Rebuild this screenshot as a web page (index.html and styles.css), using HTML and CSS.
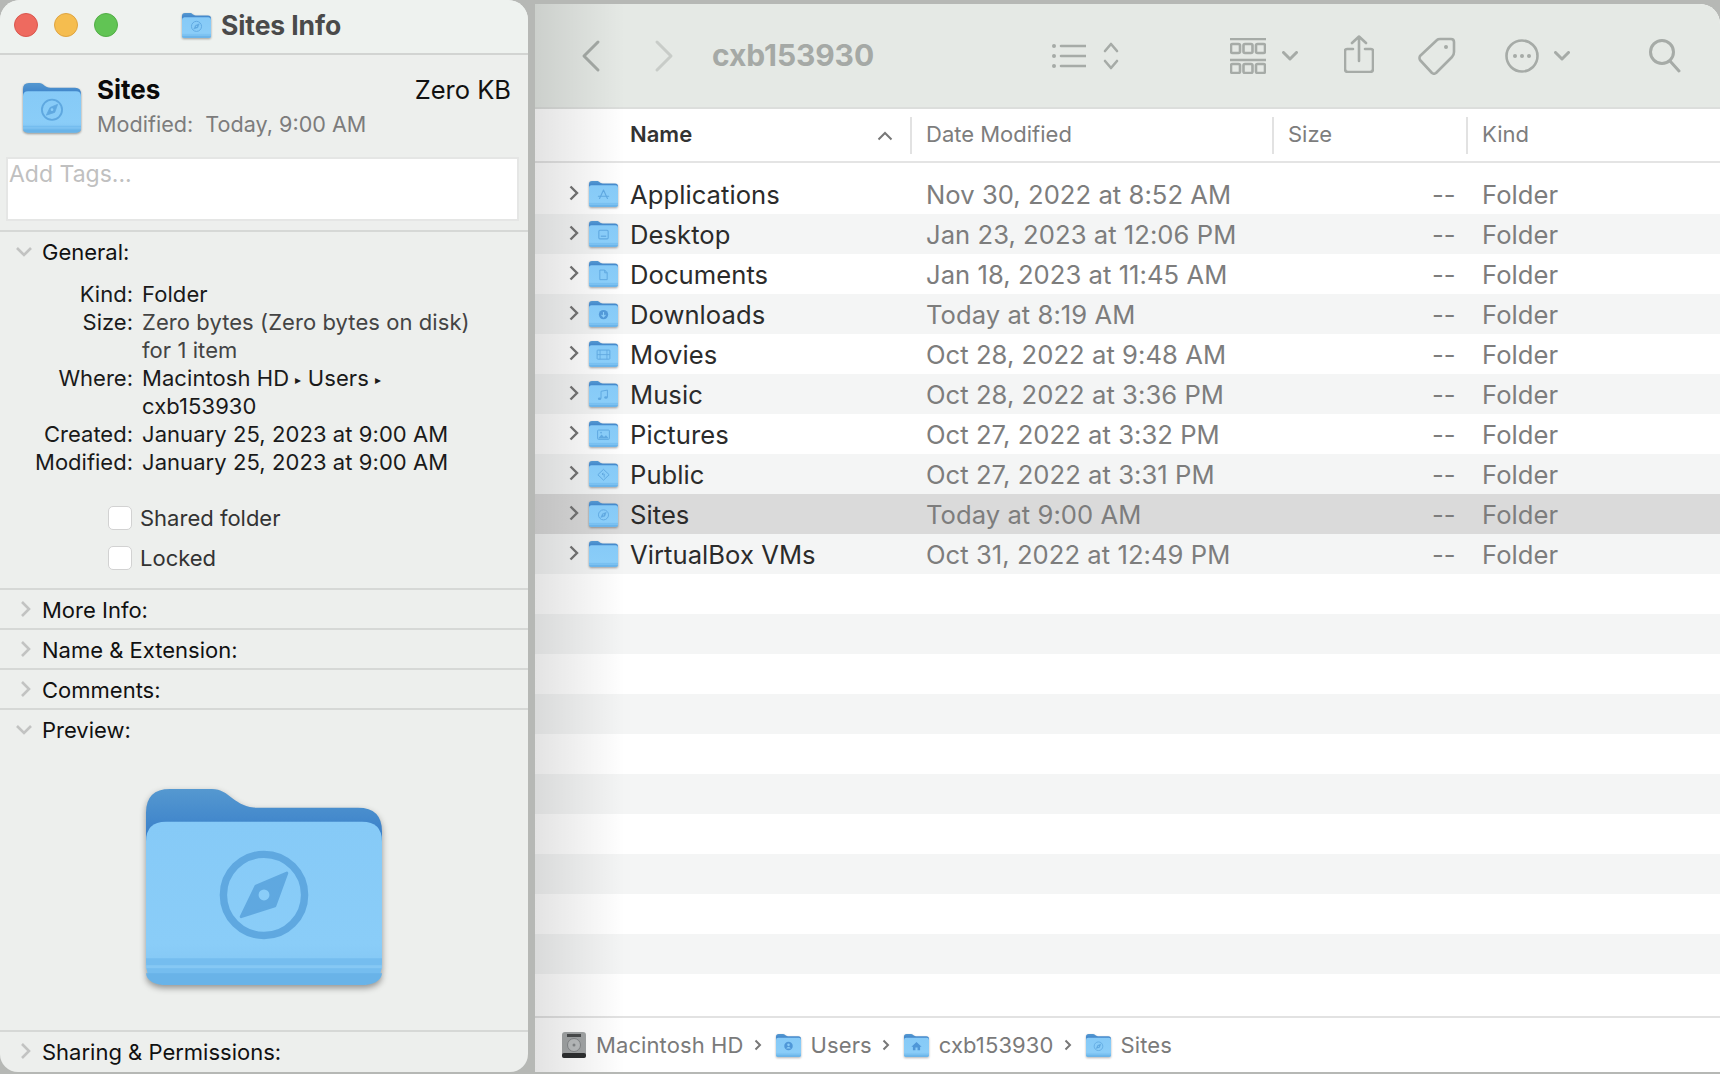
FILE: index.html
```html
<!DOCTYPE html>
<html lang="en">
<head>
  <meta charset="UTF-8">
  <title>Sites Info</title>
  <link rel="stylesheet" href="styles.css">
</head>
<body>

<svg class="defs" width="0" height="0">
  <defs>
    <linearGradient id="backFill" x1="0" y1="0" x2="0" y2="1">
      <stop offset="0" stop-color="#5598d0"/>
      <stop offset="0.4" stop-color="#3c82ca"/>
    </linearGradient>
    <linearGradient id="frontFill" x1="0" y1="0" x2="0" y2="1">
      <stop offset="0" stop-color="#86caf7"/>
      <stop offset="0.75" stop-color="#8acdf8"/>
      <stop offset="1" stop-color="#7fc3f2"/>
    </linearGradient>
    <symbol id="folder" viewBox="0 0 236 200" preserveAspectRatio="none">
      <path fill="url(#backFill)" d="M0 24Q0 0 24 0H66C84 0 88 19 112 19H212Q236 19 236 43V110H0Z"/>
      <path fill="url(#frontFill)" d="M0 53Q0 33 20 33H216Q236 33 236 53V175Q236 198 213 198H23Q0 198 0 175Z"/>
      <path fill="#75bdef" d="M0 171H236V175Q236 198 213 198H23Q0 198 0 175Z"/>
      <rect y="178" width="236" height="3" fill="#86c8f4"/>
      <path fill="#69b3e8" d="M0 186H236Q235 198 213 198H23Q1 198 0 186Z"/>
    </symbol>
    <symbol id="g-compass" viewBox="0 0 236 200">
      <circle cx="118" cy="107" r="41" fill="none" stroke-width="7.5" stroke="#5fa8e0"/>
      <path d="M141 85L129 118L95 129L110 98Z" fill="#5fa8e0" stroke="#5fa8e0" stroke-width="3" stroke-linejoin="round"/>
      <circle cx="118" cy="107" r="5.5" fill="#8acdf8"/>
    </symbol>
    <symbol id="g-apps" viewBox="0 0 236 200">
      <path d="M118 68L86 136M118 68L150 136M76 118H160" fill="none" stroke="#5fa8e0" stroke-width="9" stroke-linecap="round"/>
    </symbol>
    <symbol id="g-desktop" viewBox="0 0 236 200">
      <rect x="80" y="70" width="76" height="70" rx="9" fill="none" stroke="#5fa8e0" stroke-width="9"/>
      <path d="M96 118H140" stroke="#5fa8e0" stroke-width="10"/>
    </symbol>
    <symbol id="g-doc" viewBox="0 0 236 200">
      <path d="M88 68H128L148 90V146H88ZM128 68V90H148" fill="none" stroke="#5fa8e0" stroke-width="8" stroke-linejoin="round"/>
    </symbol>
    <symbol id="g-down" viewBox="0 0 236 200">
      <circle cx="118" cy="105" r="38" fill="#5299d8"/>
      <path d="M118 84V122M102 108L118 124L134 108" fill="none" stroke="#8acdf8" stroke-width="9"/>
    </symbol>
    <symbol id="g-film" viewBox="0 0 236 200">
      <rect x="66" y="68" width="104" height="74" rx="6" fill="none" stroke="#5fa8e0" stroke-width="8"/>
      <path d="M90 68V142M146 68V142M66 105H90M146 105H170M90 105H146" fill="none" stroke="#5fa8e0" stroke-width="7"/>
    </symbol>
    <symbol id="g-music" viewBox="0 0 236 200">
      <path d="M98 136V78L150 68V126" fill="none" stroke="#5fa8e0" stroke-width="8"/>
      <ellipse cx="86" cy="138" rx="14" ry="10" fill="#5fa8e0"/>
      <ellipse cx="138" cy="128" rx="14" ry="10" fill="#5fa8e0"/>
    </symbol>
    <symbol id="g-picture" viewBox="0 0 236 200">
      <rect x="70" y="68" width="96" height="76" rx="7" fill="none" stroke="#5fa8e0" stroke-width="8"/>
      <path d="M74 136L102 104L122 124L138 110L162 136Z" fill="#5fa8e0"/>
      <circle cx="98" cy="88" r="7" fill="#5fa8e0"/>
    </symbol>
    <symbol id="g-public" viewBox="0 0 236 200">
      <path d="M118 62L164 106L118 150L72 106Z" fill="none" stroke="#5fa8e0" stroke-width="8" stroke-linejoin="round"/>
      <path d="M124 128V100H106M116 90L106 100L116 110" fill="none" stroke="#5fa8e0" stroke-width="7"/>
    </symbol>
    <symbol id="g-user" viewBox="0 0 236 200">
      <circle cx="118" cy="105" r="40" fill="#4f97d8"/>
      <circle cx="118" cy="94" r="12" fill="#8acdf8"/>
      <path d="M96 128Q118 100 140 128Z" fill="#8acdf8"/>
    </symbol>
    <symbol id="g-home" viewBox="0 0 236 200">
      <path d="M118 68L166 112H152V146H128V120H108V146H84V112H70Z" fill="#4f97d8"/>
    </symbol>
  </defs>
</svg>

<main class="screen">

  <aside class="info">
    <header class="info-title">
      <div class="lights">
        <span class="light red"></span>
        <span class="light yellow"></span>
        <span class="light green"></span>
      </div>
      <svg class="fld fld-title"><use href="#folder"/><use href="#g-compass"/></svg>
      <span class="info-title-text">Sites Info</span>
    </header>

    <section class="summary">
      <svg class="fld fld-summary"><use href="#folder"/><use href="#g-compass"/></svg>
      <div class="summary-text">
        <div class="summary-top">
          <strong class="summary-name">Sites</strong>
          <span class="summary-size">Zero KB</span>
        </div>
        <div class="summary-mod">Modified:&nbsp; Today, 9:00 AM</div>
      </div>
    </section>

    <div class="tags">Add Tags...</div>

    <section class="pane pane-general">
      <div class="pane-head">
        <svg class="disc disc-down" viewBox="0 0 16 10"><path d="M1 1L8 8L15 1"/></svg>
        General:
      </div>
      <dl class="props">
        <dt>Kind:</dt><dd>Folder</dd>
        <dt>Size:</dt><dd class="soft">Zero bytes (Zero bytes on disk)<br>for 1 item</dd>
        <dt>Where:</dt><dd>Macintosh HD <span class="tri">▸</span> Users <span class="tri">▸</span><br>cxb153930</dd>
        <dt>Created:</dt><dd>January 25, 2023 at 9:00 AM</dd>
        <dt>Modified:</dt><dd>January 25, 2023 at 9:00 AM</dd>
      </dl>
      <div class="checks">
        <label class="check"><span class="box"></span>Shared folder</label>
        <label class="check"><span class="box"></span>Locked</label>
      </div>
    </section>

    <section class="pane"><div class="pane-head"><svg class="disc disc-right" viewBox="0 0 10 16"><path d="M1 1L8 8L1 15"/></svg>More Info:</div></section>
    <section class="pane"><div class="pane-head"><svg class="disc disc-right" viewBox="0 0 10 16"><path d="M1 1L8 8L1 15"/></svg>Name &amp; Extension:</div></section>
    <section class="pane"><div class="pane-head"><svg class="disc disc-right" viewBox="0 0 10 16"><path d="M1 1L8 8L1 15"/></svg>Comments:</div></section>

    <section class="pane pane-preview">
      <div class="pane-head">
        <svg class="disc disc-down" viewBox="0 0 16 10"><path d="M1 1L8 8L15 1"/></svg>
        Preview:
      </div>
      <div class="preview">
        <svg class="fld fld-big"><use href="#folder"/><use href="#g-compass"/></svg>
      </div>
    </section>

    <section class="pane"><div class="pane-head"><svg class="disc disc-right" viewBox="0 0 10 16"><path d="M1 1L8 8L1 15"/></svg>Sharing &amp; Permissions:</div></section>
  </aside>

  <div class="finder">
    <div class="finder-shade"></div>

    <header class="toolbar">
      <svg class="tb tb-back" viewBox="0 0 20 34"><path d="M17 3L3 17L17 31"/></svg>
      <svg class="tb tb-fwd" viewBox="0 0 20 34"><path d="M3 3L17 17L3 31"/></svg>
      <span class="tb-title">cxb153930</span>
      <svg class="tb tb-list" viewBox="0 0 34 26">
        <circle class="dot" cx="2" cy="3" r="2"/><circle class="dot" cx="2" cy="13" r="2"/><circle class="dot" cx="2" cy="23" r="2"/>
        <path d="M9 3H34M9 13H34M9 23H34"/>
      </svg>
      <svg class="tb tb-updown" viewBox="0 0 16 30"><path d="M2 10L8 3L14 10M2 20L8 27L14 20"/></svg>
      <svg class="tb tb-grid" viewBox="0 0 36 36">
        <path d="M0 1H36M0 22H36" />
        <rect x="1" y="6" width="9" height="9" rx="1.5"/><rect x="13.5" y="6" width="9" height="9" rx="1.5"/><rect x="26" y="6" width="9" height="9" rx="1.5"/>
        <rect x="1" y="26" width="9" height="9" rx="1.5"/><rect x="13.5" y="26" width="9" height="9" rx="1.5"/><rect x="26" y="26" width="9" height="9" rx="1.5"/>
      </svg>
      <svg class="tb tb-chev tb-chev1" viewBox="0 0 16 10"><path d="M1.5 1.5L8 8L14.5 1.5"/></svg>
      <svg class="tb tb-share" viewBox="0 0 30 38">
        <path d="M9 14H3Q1 14 1 16V34Q1 37 4 37H26Q29 37 29 34V16Q29 14 27 14H21M15 26V2M8 8L15 1.5L22 8"/>
      </svg>
      <svg class="tb tb-tag" viewBox="0 0 38 38">
        <path d="M22 2H33Q36 2 36 5V15Q36 18 34 20L18 36Q16 37.500 14 36L2 23Q1 21 2 19L19 3Q20 2 22 2Z"/>
        <circle class="dot" cx="28" cy="10" r="2"/>
      </svg>
      <svg class="tb tb-more" viewBox="0 0 34 34">
        <circle cx="17" cy="17" r="15.500"/>
        <circle class="dot" cx="10" cy="17" r="2"/><circle class="dot" cx="17" cy="17" r="2"/><circle class="dot" cx="24" cy="17" r="2"/>
      </svg>
      <svg class="tb tb-chev tb-chev2" viewBox="0 0 16 10"><path d="M1.500 1.500L8 8L14.500 1.500"/></svg>
      <svg class="tb tb-search" viewBox="0 0 32 34">
        <circle cx="13" cy="13" r="11.500"/>
        <path d="M21 22L30 32"/>
      </svg>
    </header>

    <div class="cols">
      <div class="col col-name">
        <span>Name</span>
        <svg class="sort" viewBox="0 0 16 10"><path d="M1.500 8.500L8 2L14.500 8.500"/></svg>
      </div>
      <div class="col col-date">Date Modified</div>
      <div class="col col-size">Size</div>
      <div class="col col-kind">Kind</div>
    </div>

    <div class="rows">
      <div class="row"><svg class="exp" viewBox="0 0 10 16"><path d="M1.500 1.500L8 8L1.500 14.500"/></svg><svg class="fld fld-row"><use href="#folder"/><use href="#g-apps"/></svg><span class="r-name">Applications</span><span class="r-date">Nov 30, 2022 at 8:52 AM</span><span class="r-size">--</span><span class="r-kind">Folder</span></div>
      <div class="row"><svg class="exp" viewBox="0 0 10 16"><path d="M1.500 1.500L8 8L1.500 14.500"/></svg><svg class="fld fld-row"><use href="#folder"/><use href="#g-desktop"/></svg><span class="r-name">Desktop</span><span class="r-date">Jan 23, 2023 at 12:06 PM</span><span class="r-size">--</span><span class="r-kind">Folder</span></div>
      <div class="row"><svg class="exp" viewBox="0 0 10 16"><path d="M1.500 1.500L8 8L1.500 14.500"/></svg><svg class="fld fld-row"><use href="#folder"/><use href="#g-doc"/></svg><span class="r-name">Documents</span><span class="r-date">Jan 18, 2023 at 11:45 AM</span><span class="r-size">--</span><span class="r-kind">Folder</span></div>
      <div class="row"><svg class="exp" viewBox="0 0 10 16"><path d="M1.500 1.500L8 8L1.500 14.500"/></svg><svg class="fld fld-row"><use href="#folder"/><use href="#g-down"/></svg><span class="r-name">Downloads</span><span class="r-date">Today at 8:19 AM</span><span class="r-size">--</span><span class="r-kind">Folder</span></div>
      <div class="row"><svg class="exp" viewBox="0 0 10 16"><path d="M1.500 1.500L8 8L1.500 14.500"/></svg><svg class="fld fld-row"><use href="#folder"/><use href="#g-film"/></svg><span class="r-name">Movies</span><span class="r-date">Oct 28, 2022 at 9:48 AM</span><span class="r-size">--</span><span class="r-kind">Folder</span></div>
      <div class="row"><svg class="exp" viewBox="0 0 10 16"><path d="M1.500 1.500L8 8L1.500 14.500"/></svg><svg class="fld fld-row"><use href="#folder"/><use href="#g-music"/></svg><span class="r-name">Music</span><span class="r-date">Oct 28, 2022 at 3:36 PM</span><span class="r-size">--</span><span class="r-kind">Folder</span></div>
      <div class="row"><svg class="exp" viewBox="0 0 10 16"><path d="M1.500 1.500L8 8L1.500 14.500"/></svg><svg class="fld fld-row"><use href="#folder"/><use href="#g-picture"/></svg><span class="r-name">Pictures</span><span class="r-date">Oct 27, 2022 at 3:32 PM</span><span class="r-size">--</span><span class="r-kind">Folder</span></div>
      <div class="row"><svg class="exp" viewBox="0 0 10 16"><path d="M1.500 1.500L8 8L1.500 14.500"/></svg><svg class="fld fld-row"><use href="#folder"/><use href="#g-public"/></svg><span class="r-name">Public</span><span class="r-date">Oct 27, 2022 at 3:31 PM</span><span class="r-size">--</span><span class="r-kind">Folder</span></div>
      <div class="row selected"><svg class="exp" viewBox="0 0 10 16"><path d="M1.500 1.500L8 8L1.500 14.500"/></svg><svg class="fld fld-row"><use href="#folder"/><use href="#g-compass"/></svg><span class="r-name">Sites</span><span class="r-date">Today at 9:00 AM</span><span class="r-size">--</span><span class="r-kind">Folder</span></div>
      <div class="row"><svg class="exp" viewBox="0 0 10 16"><path d="M1.500 1.500L8 8L1.500 14.500"/></svg><svg class="fld fld-row"><use href="#folder"/></svg><span class="r-name">VirtualBox VMs</span><span class="r-date">Oct 31, 2022 at 12:49 PM</span><span class="r-size">--</span><span class="r-kind">Folder</span></div>
      <div class="row"></div>
      <div class="row"></div>
      <div class="row"></div>
      <div class="row"></div>
      <div class="row"></div>
      <div class="row"></div>
      <div class="row"></div>
      <div class="row"></div>
      <div class="row"></div>
      <div class="row"></div>
    </div>

    <footer class="pathbar">
      <svg class="hd" viewBox="0 0 26 28">
        <rect x="1" y="1" width="24" height="26" rx="3" fill="#a3a6a7"/>
        <rect x="1" y="22" width="24" height="5" rx="2" fill="#2d2f30"/>
        <rect x="6" y="3" width="14" height="3" fill="#4a4c4d"/>
        <circle cx="13" cy="14" r="6.500" fill="#bcbfc0" stroke="#85888a"/>
        <circle cx="13" cy="14" r="1.500" fill="#85888a"/>
      </svg>
      <span>Macintosh HD</span>
      <svg class="crumb" viewBox="0 0 8 12"><path d="M1.500 1.500L6 6L1.500 10.500"/></svg>
      <svg class="fld fld-path"><use href="#folder"/><use href="#g-user"/></svg>
      <span>Users</span>
      <svg class="crumb" viewBox="0 0 8 12"><path d="M1.500 1.500L6 6L1.500 10.500"/></svg>
      <svg class="fld fld-path"><use href="#folder"/><use href="#g-home"/></svg>
      <span>cxb153930</span>
      <svg class="crumb" viewBox="0 0 8 12"><path d="M1.500 1.500L6 6L1.500 10.500"/></svg>
      <svg class="fld fld-path"><use href="#folder"/><use href="#g-compass"/></svg>
      <span>Sites</span>
    </footer>
  </div>

</main>

</body>
</html>
```

FILE: styles.css
```css
* {
  box-sizing: border-box;
}
html, body {
  margin: 0;
  height: 100%;
  overflow: hidden;
}
body {
  font-family: Inter, "Open Sans", sans-serif;
  background: #b6b8b5;
  color: #222;
}
.defs {
  display: block;
  height: 0;
}
.screen {
  display: flex;
  width: 1720px;
  height: 1074px;
}

/* folders */
.fld {
  display: block;
  flex: none;
  overflow: visible;
}
.fld use {
  width: 100%;
  height: 100%;
}
.fld-title {
  width: 29px;
  height: 25px;
  margin-right: 10px;
  filter: drop-shadow(0 1px 1px rgba(0, 0, 0, .35));
}
.fld-summary {
  width: 58px;
  height: 50px;
  filter: drop-shadow(0 1px 1px rgba(0, 0, 0, .4));
}
.fld-big {
  width: 236px;
  height: 198px;
  filter: drop-shadow(0 3px 3px rgba(0, 0, 0, .38));
}
.fld-row {
  width: 29px;
  height: 26px;
  filter: drop-shadow(0 1px 1px rgba(0, 0, 0, .35));
}
.fld-path {
  width: 25px;
  height: 23px;
  filter: drop-shadow(0 1px 1px rgba(0, 0, 0, .3));
}

/* info window */
.info {
  flex: none;
  width: 528px;
  height: 1072px;
  background: #edefed;
  border-radius: 20px 20px 18px 18px;
  overflow: hidden;
}
.info-title {
  display: flex;
  align-items: center;
  height: 55px;
  padding: 0 0 3px 14px;
  background: #eef2ef;
  border-bottom: 2px solid #d2d4d2;
}
.lights {
  display: flex;
  gap: 16px;
  margin-right: 64px;
}
.light {
  width: 24px;
  height: 24px;
  border-radius: 50%;
}
.red { background: #ee6a5f; border: 1px solid #d9574e; }
.yellow { background: #f5bd4f; border: 1px solid #dea440; }
.green { background: #61c454; border: 1px solid #52ad46; }
.info-title-text {
  font-size: 26.500px;
  font-weight: 700;
  color: #4a4a4a;
  letter-spacing: -.1px;
}
.summary {
  display: flex;
  align-items: flex-start;
  height: 102px;
  padding: 28px 17px 0 23px;
}
.summary-text {
  flex: 1;
  margin-left: 16px;
  margin-top: -12px;
}
.summary-top {
  display: flex;
  justify-content: space-between;
  align-items: center;
  height: 36px;
}
.summary-name {
  font-size: 26px;
  font-weight: 700;
  color: #0a0a0a;
}
.summary-size {
  font-size: 25.500px;
  color: #111;
}
.summary-mod {
  margin-top: 4px;
  font-size: 21.600px;
  color: #7c7c7c;
}
.tags {
  height: 64px;
  margin: 0 9px 0 6px;
  padding: 1px 0 0 1px;
  background: #fff;
  border: 2px solid #e5e6e5;
  font-size: 23px;
  line-height: 28px;
  color: #c0c0c0;
}
.pane {
  border-top: 2px solid #d6d8d6;
}
.tags + .pane {
  margin-top: 9px;
}
.pane-head {
  position: relative;
  height: 38px;
  padding-left: 42px;
  font-size: 22px;
  line-height: 40px;
  color: #111;
}
.pane-general {
  height: 358px;
}
.pane-preview {
  height: 322px;
}
.disc {
  position: absolute;
  fill: none;
  stroke: #c2c3c2;
  stroke-width: 2.600;
}
.disc-down {
  left: 16px;
  top: 15px;
  width: 16px;
  height: 10px;
}
.disc-right {
  left: 21px;
  top: 11px;
  width: 10px;
  height: 16px;
}
.props {
  display: grid;
  grid-template-columns: 133px 1fr;
  column-gap: 9px;
  margin: 10px 0 0;
  font-size: 22px;
  line-height: 28px;
  color: #1a1a1a;
}
.props dt {
  text-align: right;
}
.props dd {
  margin: 0;
  white-space: nowrap;
  letter-spacing: .07px;
}
.props .soft {
  color: #444;
}
.tri {
  font-size: 12px;
  line-height: 0;
  vertical-align: 2px;
}
.checks {
  display: flex;
  flex-direction: column;
  gap: 16px;
  margin: 30px 0 0 108px;
}
.check {
  display: flex;
  align-items: center;
  gap: 8px;
  height: 24px;
  font-size: 22px;
  color: #333;
}
.box {
  width: 24px;
  height: 24px;
  background: #fff;
  border: 1px solid #d2d2d2;
  border-radius: 5px;
}
.preview {
  display: flex;
  justify-content: center;
  padding: 41px 0 0;
}

/* finder window */
.finder {
  position: relative;
  flex: 1;
  display: flex;
  flex-direction: column;
  height: 1068px;
  margin: 4px 0 0 7px;
  background: #fff;
  border-top-right-radius: 20px;
  overflow: hidden;
}
.finder-shade {
  position: absolute;
  left: 0;
  top: 0;
  bottom: 0;
  width: 90px;
  background: linear-gradient(to right, rgba(0, 0, 0, .11), rgba(0, 0, 0, 0));
  pointer-events: none;
}
.toolbar {
  display: flex;
  align-items: center;
  flex: none;
  height: 105px;
  padding-left: 47px;
  background: #e5e9e5;
  border-bottom: 2px solid #dcdedc;
}
.tb {
  display: block;
  flex: none;
  fill: none;
  stroke: #a6aba7;
  stroke-width: 2.600;
  stroke-linecap: round;
  stroke-linejoin: round;
}
.tb .dot {
  fill: #a6aba7;
  stroke: none;
}
.tb-back {
  width: 20px;
  height: 34px;
  stroke-width: 3;
  margin-left: -1px;
}
.tb-fwd {
  width: 20px;
  height: 34px;
  margin-left: 53px;
  stroke: #c8ccc8;
  stroke-width: 3;
}
.tb-title {
  width: 340px;
  margin: -1px 0 0 38px;
  font-size: 30px;
  font-weight: 700;
  color: #a5a9a6;
  letter-spacing: -.1px;
}
.tb-list {
  width: 34px;
  height: 26px;
}
.tb-updown {
  width: 16px;
  height: 30px;
  margin-left: 17px;
}
.tb-grid {
  width: 36px;
  height: 36px;
  margin-left: 111px;
}
.tb-chev {
  width: 16px;
  height: 10px;
  stroke-width: 3;
}
.tb-chev1 {
  margin-left: 16px;
}
.tb-share {
  width: 30px;
  height: 38px;
  margin: -4px 0 0 46px;
}
.tb-tag {
  width: 38px;
  height: 38px;
  margin-left: 44px;
}
.tb-more {
  width: 34px;
  height: 34px;
  margin-left: 49px;
}
.tb-chev2 {
  margin-left: 15px;
}
.tb-search {
  width: 32px;
  height: 34px;
  margin-left: 79px;
  stroke-width: 3;
}
.cols {
  display: flex;
  flex: none;
  height: 54px;
  padding: 8px 0 0;
  border-bottom: 2px solid #e4e4e4;
  font-size: 22px;
  color: #7d7d7d;
}
.col {
  height: 37px;
  line-height: 34px;
}
.col-name {
  display: flex;
  align-items: center;
  width: 375px;
  height: 34px;
  padding-left: 95px;
  font-weight: 600;
  color: #333;
}
.col-name span {
  flex: 1;
}
.sort {
  width: 16px;
  height: 10px;
  margin: 4px 17px 0 0;
  fill: none;
  stroke: #777;
  stroke-width: 2;
}
.col-date, .col-size, .col-kind {
  padding-left: 14px;
  border-left: 2px solid #e2e2e2;
}
.col-date {
  width: 362px;
}
.col-size {
  width: 194px;
}
.rows {
  flex: 1;
  padding-top: 11px;
  overflow: hidden;
}
.row {
  display: flex;
  align-items: center;
  height: 40px;
  padding: 0 0 0 34px;
  font-size: 25.600px;
  letter-spacing: .05px;
  color: #7d7d7d;
}
.row:nth-child(even) {
  background: #f4f5f5;
}
.row.selected {
  background: #dadada;
}
.exp {
  flex: none;
  width: 10px;
  height: 16px;
  margin: -2px 10px 0 0;
  fill: none;
  stroke: #757575;
  stroke-width: 2.400;
}
.r-name {
  width: 296px;
  margin-left: 12px;
  color: #2b2b2b;
}
.r-date {
  width: 506px;
}
.r-size {
  width: 50px;
}
.pathbar {
  display: flex;
  align-items: center;
  flex: none;
  height: 56px;
  padding-left: 26px;
  background: #fff;
  border-top: 2px solid #e2e2e2;
  font-size: 22px;
  color: #7a7a7a;
}
.pathbar span {
  letter-spacing: .1px;
}
.hd {
  width: 26px;
  height: 28px;
  margin-right: 9px;
}
.crumb {
  width: 8px;
  height: 12px;
  margin: 0 14px 0 10px;
  fill: none;
  stroke: #777;
  stroke-width: 2;
}
.pathbar .fld-path {
  margin-right: 10px;
}
```
